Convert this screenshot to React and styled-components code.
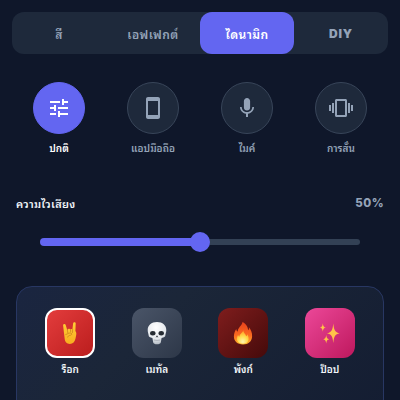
import { useState } from "react";
import styled, { createGlobalStyle } from "styled-components";
import { MdTune, MdSmartphone, MdVibration } from "react-icons/md";

const GlobalStyle = createGlobalStyle`
  * {
    box-sizing: border-box;
  }
  body {
    margin: 0;
    background: #0f172a;
    overflow: hidden;
  }
`;

const Root = styled.div`
  height: 400px;
  width: 400px;
  overflow: hidden;
  display: flex;
  flex-direction: column;
  background: #0f172a;
  color: #f1f5f9;
  font-family: Inter, "Noto Sans Thai Looped", Loma, Garuda, Waree, sans-serif;
  font-weight: 600;
`;

const Tabs = styled.div`
  display: grid;
  grid-template-columns: repeat(4, 1fr);
  height: 42px;
  margin: 12px 12px 0;
  border-radius: 12px;
  background: #1e293b;
  flex-shrink: 0;
`;

const Tab = styled.button`
  border: none;
  padding: 0;
  border-radius: 12px;
  background: ${(p) => (p.$active ? "#6366f1" : "transparent")};
  color: ${(p) => (p.$active ? "#ffffff" : "#94a3b8")};
  font-family: inherit;
  font-size: 12px;
  font-weight: ${(p) => (p.$latin ? 900 : 600)};
  letter-spacing: ${(p) => (p.$latin ? 0.9 : 0.4)}px;
`;

const Modes = styled.div`
  display: grid;
  grid-template-columns: repeat(4, 1fr);
  margin: 28px 12px 0;
`;

const Mode = styled.div`
  display: flex;
  flex-direction: column;
  align-items: center;
  gap: 7px;
  color: ${(p) => (p.$active ? "#ffffff" : "#94a3b8")};
`;

const ModeCircle = styled.div`
  display: flex;
  align-items: center;
  justify-content: center;
  width: 52px;
  height: 52px;
  border-radius: 50%;
  border: 1px solid ${(p) => (p.$active ? "#6366f1" : "#384559")};
  background: ${(p) => (p.$active ? "#6366f1" : "#1e293b")};
`;

const Label = styled.span`
  font-size: 10px;
  line-height: 14px;
  white-space: nowrap;
`;

const SliderHeader = styled.div`
  display: flex;
  justify-content: space-between;
  align-items: center;
  height: 20px;
  margin: 38px 16px 0;
`;

const SliderTitle = styled.span`
  font-size: 11px;
  letter-spacing: 0.25px;
`;

const SliderValue = styled.span`
  font-size: 11.5px;
  font-weight: 800;
  letter-spacing: 0.5px;
  color: #94a3b8;
`;

const Slider = styled.div`
  display: flex;
  align-items: center;
  height: 20px;
  margin: 19px 40px 0;
`;

const Fill = styled.div`
  height: 8px;
  border-radius: 4px 0 0 4px;
  background: #6366f1;
`;

const Thumb = styled.div`
  width: 20px;
  height: 20px;
  margin: 0 -10px;
  border-radius: 50%;
  background: #6366f1;
  z-index: 1;
`;

const Rail = styled.div`
  flex: 1;
  height: 6px;
  border-radius: 0 3px 3px 0;
  background: #334155;
`;

const Panel = styled.div`
  display: grid;
  grid-template-columns: repeat(4, 1fr);
  align-content: start;
  flex: 1;
  margin: 34px 16px -20px;
  padding: 21px 10px 0;
  border: 1px solid #283763;
  border-radius: 16px;
  background: linear-gradient(135deg, #1a2540 0%, #1b2638 35%, #141d32 100%);
`;

const Style = styled.div`
  display: flex;
  flex-direction: column;
  align-items: center;
  gap: 4px;
`;

const Tile = styled.div`
  display: flex;
  align-items: center;
  justify-content: center;
  width: 50px;
  height: 50px;
  border-radius: 12px;
  border: 2px solid ${(p) => (p.$active ? "#ffffff" : "transparent")};
  background: linear-gradient(135deg, ${(p) => p.$from}, ${(p) => p.$to}) border-box;
`;

const Mic = ({ size }) => (
  <svg width={size} height={size} viewBox="0 0 24 24" fill="currentColor">
    <path d="M12 14.5c1.8 0 3.1-1.4 3.1-3.1V5.1C15.1 3.4 13.7 2 12 2S8.9 3.4 8.9 5.1v6.3c0 1.7 1.3 3.1 3.1 3.1Zm5.3-3.5c0 3-2.54 5.1-5.3 5.1S6.7 14 6.7 11H5c0 3.41 2.72 6.23 6 6.72V21h2v-3.28c3.28-.48 6-3.3 6-6.72Z" />
  </svg>
);

const Horns = () => (
  <svg width="24" height="24" viewBox="0 0 24 24">
    <defs>
      <linearGradient id="hand" x1="0" y1="0" x2="0" y2="1">
        <stop offset="0" stopColor="#ffcf35" />
        <stop offset="1" stopColor="#f8ad20" />
      </linearGradient>
    </defs>
    <path
      d="M5.1 4.4C4.9 2.8 7.3 2.4 7.7 3.9l1.5 5.2 1-1c.6-.6 1.7-.5 2.2.2.6-.6 1.6-.4 2 .3l.7-6.2c.2-1.6 2.7-1.5 2.6.1l-.3 7.6c.9 1.2 1.1 2.5.8 3.8l-.7 3.6c-.7 3.3-2.5 5.5-5.6 5.5-3.4 0-4.8-2.2-5.2-4.9Z"
      fill="url(#hand)"
    />
    <path
      d="m9.4 9.2.4 2.5m2.7-3.2.2 2.4m1.9-2.2-.1 2.8m-6.7 2c2-.5 3-1.8 4.8-1.4 2 .4 1.2 2.2-.8 2.3-1.2.2-1.8.7-2.1 1.7"
      fill="none"
      stroke="#c67a1c"
      strokeWidth=".7"
      strokeLinecap="round"
    />
  </svg>
);

const Skull = () => (
  <svg width="24" height="24" viewBox="0 0 24 24">
    <defs>
      <radialGradient id="bone" cx=".45" cy=".25" r=".8">
        <stop offset="0" stopColor="#ffffff" />
        <stop offset=".65" stopColor="#e5e9ed" />
        <stop offset="1" stopColor="#aab2bb" />
      </radialGradient>
    </defs>
    <path
      d="M12 1C6.3 1 2.7 4.3 2.7 9c0 2.4.9 4 .9 5.3 0 1.5 1.2 2.3 3.8 2.7l.8 4.5c.3 1.4 1.7 1.7 3.8 1.7s3.5-.3 3.8-1.7l.8-4.5c2.6-.4 3.8-1.2 3.8-2.7 0-1.3.9-2.9.9-5.3 0-4.7-3.6-8-9.3-8Z"
      fill="url(#bone)"
    />
    <ellipse cx="7.8" cy="12.3" rx="2.7" ry="2.2" fill="#252b32" />
    <ellipse cx="16.2" cy="12.3" rx="2.7" ry="2.2" fill="#252b32" />
    <path d="m12 14.2-1.4 2.3 1.4-.5 1.4.5Z" fill="#343a42" />
    <path d="M8.8 19q3.2.8 6.4 0" fill="none" stroke="#8d949d" strokeWidth=".6" />
  </svg>
);

const Flame = () => (
  <svg width="24" height="24" viewBox="0 0 24 24">
    <defs>
      <linearGradient id="fire" x1="0" y1="0" x2="0" y2="1">
        <stop offset="0" stopColor="#e8401c" />
        <stop offset=".6" stopColor="#fb6b20" />
        <stop offset="1" stopColor="#ffb72b" />
      </linearGradient>
      <radialGradient id="core" cx=".5" cy=".85" r=".8">
        <stop offset="0" stopColor="#fff6b0" />
        <stop offset=".5" stopColor="#ffdb4e" />
        <stop offset="1" stopColor="#ff9a24" />
      </radialGradient>
    </defs>
    <path
      d="M11.5 1c4 2.1 5.3 5 5.6 8.2.8-.5 1-1.8.8-3 2.1 2.4 3.4 5.7 3.2 9.2-.2 4.9-3.8 8-9.1 8-5.5 0-9.1-3.1-9.1-7.9 0-3.3 1.1-5.7 2.4-7.5.1 1.4.6 2.4 1.5 2.6C6.6 6.7 10.8 5 11.5 1Z"
      fill="url(#fire)"
    />
    <path
      d="M12.3 9.3c.1 3 2.5 3.5 2.9 6 .7-.5 1-1.2 1.1-2.1 2.9 4.8 1.2 9.5-4.3 9.5s-7.7-4.3-4.9-9c.2 1 .6 1.7 1.3 2 .1-2.8 3.1-3.6 3.9-6.4Z"
      fill="url(#core)"
    />
  </svg>
);

const Sparkles = () => (
  <svg width="24" height="24" viewBox="0 0 24 24" fill="#ffc348">
    <path d="M15.3 2.4c.7 6.7 1.7 9 6.4 9.8-4.7.8-5.7 3.1-6.4 9.8-.7-6.700-1.700-9-6.400-9.800 4.700-.8 5.700-3.100 6.400-9.800Z" />
    <path d="M4.8 2.2c.4 3 .9 3.900 3 4.300-2.100.4-2.600 1.300-3 4.300-.4-3-.9-3.900-3-4.300 2.100-.4 2.600-1.300 3-4.300Z" />
    <path d="M8.2 14c.4 2.900.9 3.800 3 4.200-2.100.4-2.600 1.300-3 4.200-.4-2.900-.9-3.800-3-4.200 2.100-.4 2.600-1.300 3-4.200Z" />
  </svg>
);

const tabs = [
  { name: "สี" },
  { name: "เอฟเฟกต์" },
  { name: "ไดนามิก" },
  { name: "DIY", latin: true },
];

const modes = [
  { name: "ปกติ", Icon: MdTune },
  { name: "แอปมือถือ", Icon: MdSmartphone },
  { name: "ไมค์", Icon: Mic },
  { name: "การสั่น", Icon: MdVibration },
];

const styles = [
  { name: "ร็อก", Icon: Horns, from: "#e53e3e", to: "#b91c1c" },
  { name: "เมทัล", Icon: Skull, from: "#4a5568", to: "#2d3748" },
  { name: "พังก์", Icon: Flame, from: "#7f1d1d", to: "#450a0a" },
  { name: "ป็อป", Icon: Sparkles, from: "#ec4899", to: "#be185d" },
];

const App = () => {
  const [tab, setTab] = useState(2);
  const [mode, setMode] = useState(0);
  const [style, setStyle] = useState(0);
  const sensitivity = 50;

  return (
    <>
      <GlobalStyle />
      <Root>
        <Tabs>
          {tabs.map((t, i) => (
            <Tab key={t.name} $active={tab === i} $latin={t.latin} onClick={() => setTab(i)}>
              {t.name}
            </Tab>
          ))}
        </Tabs>
        <Modes>
          {modes.map(({ name, Icon }, i) => (
            <Mode key={name} $active={mode === i} onClick={() => setMode(i)}>
              <ModeCircle $active={mode === i}>
                <Icon size={24} />
              </ModeCircle>
              <Label>{name}</Label>
            </Mode>
          ))}
        </Modes>
        <SliderHeader>
          <SliderTitle>ความไวเสียง</SliderTitle>
          <SliderValue>{sensitivity}%</SliderValue>
        </SliderHeader>
        <Slider>
          <Fill style={{ width: `${sensitivity}%` }} />
          <Thumb />
          <Rail />
        </Slider>
        <Panel>
          {styles.map(({ name, Icon, from, to }, i) => (
            <Style key={name} onClick={() => setStyle(i)}>
              <Tile $active={style === i} $from={from} $to={to}>
                <Icon />
              </Tile>
              <Label>{name}</Label>
            </Style>
          ))}
        </Panel>
      </Root>
    </>
  );
};

export default App;
